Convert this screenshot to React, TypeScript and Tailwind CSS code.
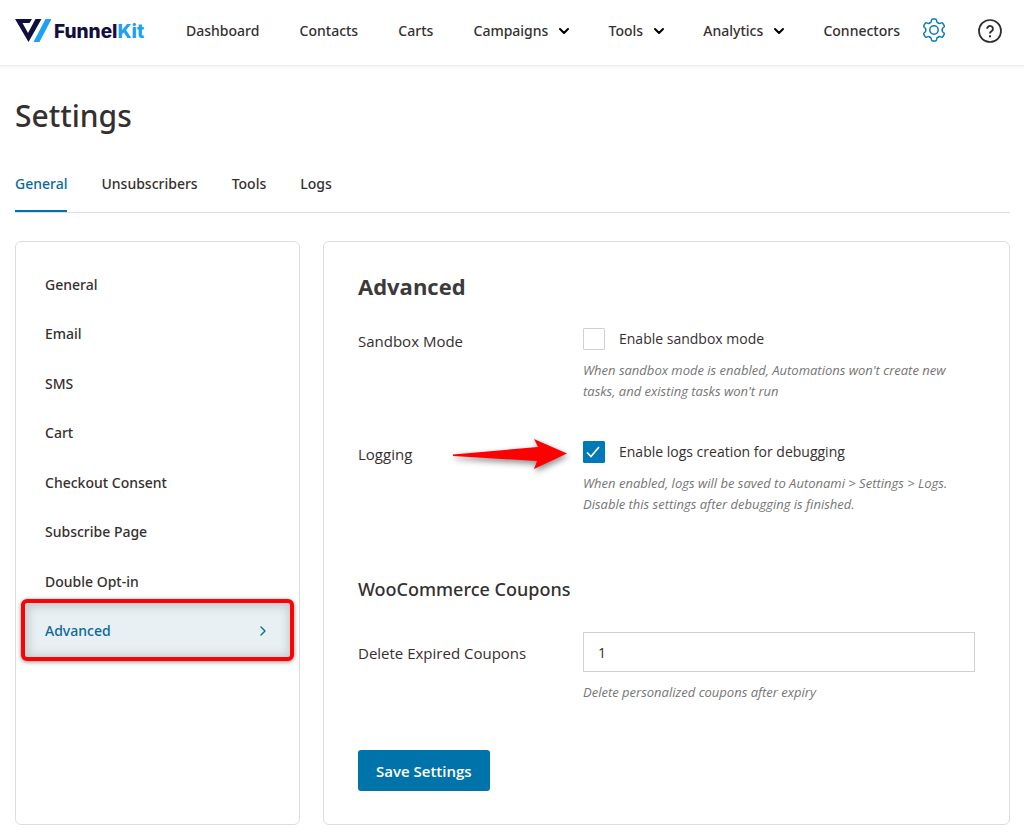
import { ChevronDown, ChevronRight } from "lucide-react";

const navItems = [
  { label: "Dashboard" },
  { label: "Contacts" },
  { label: "Carts" },
  { label: "Campaigns", menu: true },
  { label: "Tools", menu: true },
  { label: "Analytics", menu: true },
  { label: "Connectors" },
];

const tabs = ["General", "Unsubscribers", "Tools", "Logs"];

const sections = [
  "General",
  "Email",
  "SMS",
  "Cart",
  "Checkout Consent",
  "Subscribe Page",
  "Double Opt-in",
  "Advanced",
];

function Logo() {
  return (
    <a href="#" className="flex w-[130px] shrink-0 items-center gap-[3px]" aria-label="FunnelKit">
      <svg width="36" height="25" viewBox="0 0 36 25" className="shrink-0" aria-hidden="true">
        <path
          d="M0 0H17L14.5 4H7.500L13 14L20.500 0H26.500L13.500 23Z"
          fill="#120f3f"
        />
        <path d="M30.500 0H36.500L24.500 23H18.500Z" fill="#1ea1f2" />
      </svg>
      <span className="pt-px font-['Inter',sans-serif] text-[19px] leading-6 font-extrabold text-[#120f3f]">
        Funnel<span className="text-[#1ea1f2]">Kit</span>
      </span>
    </a>
  );
}

const gearAngles = [0, 60, 120, 180, 240, 300];

function GearIcon() {
  return (
    <svg width="24" height="24" viewBox="-12 -11 24 24" className="overflow-visible" fill="none" stroke="#0b7cb0" strokeWidth="1.5" strokeLinecap="round" aria-hidden="true">
      {gearAngles.map((angle) => (
        <path
          key={angle}
          transform={`rotate(${angle})`}
          d="M-4.200-7.300Q-3-7.200-2.700-8.600L-2.500-9.900Q-2.300-11-1.300-11H1.300Q2.300-11 2.500-9.900L2.700-8.600Q3-7.200 4.200-7.300"
        />
      ))}
      <circle r="4.200" />
    </svg>
  );
}

function HelpIcon() {
  return (
    <svg width="24" height="24" viewBox="0 0 24 24" fill="none" stroke="#2c2c2e" aria-hidden="true">
      <circle cx="12" cy="12" r="11" strokeWidth="1.700" />
      <path d="M9.100 9.800a2.900 2.900 0 1 1 4.400 2.500c-1 .6-1.500 1.100-1.500 2.200" strokeWidth="1.900" />
      <path d="M12 16.200v2" strokeWidth="2" />
    </svg>
  );
}

function CheckboxField({ id, label, checked }: { id: string; label: string; checked?: boolean }) {
  return (
    <div className="flex items-center gap-[14px]">
      <span className="relative flex size-[22px]">
        <input
          id={id}
          type="checkbox"
          defaultChecked={checked}
          className="peer size-full appearance-none rounded-[1px] border border-[#cfd0d4] bg-white checked:border-[#0079b8] checked:bg-[#0079b8]"
        />
        <svg
          className="pointer-events-none absolute inset-0 hidden peer-checked:block"
          width="22"
          height="22"
          viewBox="0 0 22 22"
          fill="none"
          stroke="white"
          strokeWidth="1.700"
          aria-hidden="true"
        >
          <path d="M4 11.500L8 15.500L16 6" />
        </svg>
      </span>
      <label htmlFor={id} className="text-[#353030]">
        {label}
      </label>
    </div>
  );
}

export default function App() {
  return (
    <div className="bg-white pb-3 font-['Open_Sans','Noto_Sans',sans-serif] text-[14px] leading-5 text-[#353030]">
      <header className="flex h-[66px] items-center border-b border-[#ececec] pr-[22px] pb-[3px] pl-[15px] shadow-[0_2px_3px_rgba(0,0,0,0.04)]">
        <Logo />
        <nav className="ml-[41px] flex flex-1 items-center justify-between font-['Noto_Sans',sans-serif] font-medium">
          {navItems.map((item) => (
            <a key={item.label} href="#" className="flex items-center gap-2">
              {item.label}
              {item.menu && <ChevronDown size={16} strokeWidth={3} className="-mr-1 text-black" />}
            </a>
          ))}
        </nav>
        <button type="button" aria-label="Settings" className="ml-[22px]">
          <GearIcon />
        </button>
        <button type="button" aria-label="Help" className="ml-8">
          <HelpIcon />
        </button>
      </header>

      <main className="pr-[14px] pl-[15px]">
        <h1 className="pt-[30px] font-['Noto_Sans',sans-serif] text-[30px] leading-10 font-medium">Settings</h1>

        <nav className="mt-[27px] flex h-[50px] gap-[34px] border-b border-[#dcdde1] font-['Noto_Sans',sans-serif] font-medium">
          {tabs.map((tab, i) => (
            <a
              key={tab}
              href="#"
              className={
                i === 0
                  ? "h-[49px] border-b-2 border-[#0073aa] pt-[11px] text-[#0a699c]"
                  : "pt-[11px]"
              }
            >
              {tab}
            </a>
          ))}
        </nav>

        <div className="mt-7 flex gap-[23px]">
          <aside className="w-[285px] shrink-0 rounded-md border border-[#dcdde1] px-[9px] pt-[18px]">
            <ul className="grid h-[396px] grid-rows-8 font-['Noto_Sans',sans-serif] font-medium">
              {sections.map((section) =>
                section === "Advanced" ? (
                  <li key={section} className="relative flex">
                    <span className="pointer-events-none absolute -inset-x-1 -top-2 -bottom-[5px] rounded-md border-4 border-[#fb0207] bg-[#e9f0f4] shadow-[0_1px_4px_rgba(0,0,0,0.45),inset_1px_1px_8px_3px_rgba(90,90,90,0.25)]" />
                    <a href="#" className="relative flex flex-1 items-center justify-between pr-[19px] pl-5 text-[#0a699c]">
                      {section}
                      <ChevronRight size={16} />
                    </a>
                  </li>
                ) : (
                  <li key={section} className="flex">
                    <a href="#" className="flex flex-1 items-center px-5">
                      {section}
                    </a>
                  </li>
                ),
              )}
            </ul>
          </aside>

          <form className="min-w-0 flex-1 rounded-md border border-[#dcdde1] px-[34px] pt-[29px] pb-[33px]">
            <h2 className="text-[22px] leading-[30px] font-bold text-[#3c3a3a]">Advanced</h2>

            <div className="mt-[27px] grid grid-cols-[225px_1fr]">
              <div className="pt-[3px] text-[15px]">Sandbox Mode</div>
              <div>
                <CheckboxField id="sandbox" label="Enable sandbox mode" />
                <p className="mt-[10px] text-[13px] leading-[21px] text-[#757575] italic">
                  When sandbox mode is enabled, Automations won't create new tasks, and existing tasks won't run
                </p>
              </div>
            </div>

            <div className="mt-[39px] grid grid-cols-[225px_1fr]">
              <div className="relative pt-[3px] text-[15px]">
                Logging
                <svg
                  className="absolute -top-[6px] left-[90px] overflow-visible drop-shadow-[1px_3px_3px_rgba(0,0,0,0.45)]"
                  width="124"
                  height="36"
                  viewBox="0 0 124 36"
                  aria-hidden="true"
                >
                  <path d="M5 19.500L90 12L86 4L119 18.500L86 34L89 26L5 21Z" fill="#fe0000" />
                </svg>
              </div>
              <div>
                <CheckboxField id="logging" label="Enable logs creation for debugging" checked />
                <p className="mt-[10px] text-[13px] leading-[21px] text-[#757575] italic">
                  When enabled, logs will be saved to Autonami &gt; Settings &gt; Logs. Disable this settings after
                  debugging is finished.
                </p>
              </div>
            </div>

            <h3 className="mt-[60px] font-['Noto_Sans',sans-serif] text-[18px] leading-7 font-medium">WooCommerce Coupons</h3>

            <div className="mt-[29px] grid grid-cols-[225px_1fr]">
              <label htmlFor="expiry" className="pt-[11px] text-[15px]">
                Delete Expired Coupons
              </label>
              <div>
                <input
                  id="expiry"
                  type="text"
                  defaultValue="1"
                  className="block h-10 w-full border border-[#cfd0d4] px-[14px]"
                />
                <p className="mt-[10px] text-[13px] leading-[21px] text-[#757575] italic">
                  Delete personalized coupons after expiry
                </p>
              </div>
            </div>

            <button
              type="button"
              className="mt-[47px] block h-[41px] rounded-[3px] bg-[#0073aa] px-[18px] text-[15px] font-semibold text-white"
            >
              Save Settings
            </button>
          </form>
        </div>
      </main>
    </div>
  );
}
